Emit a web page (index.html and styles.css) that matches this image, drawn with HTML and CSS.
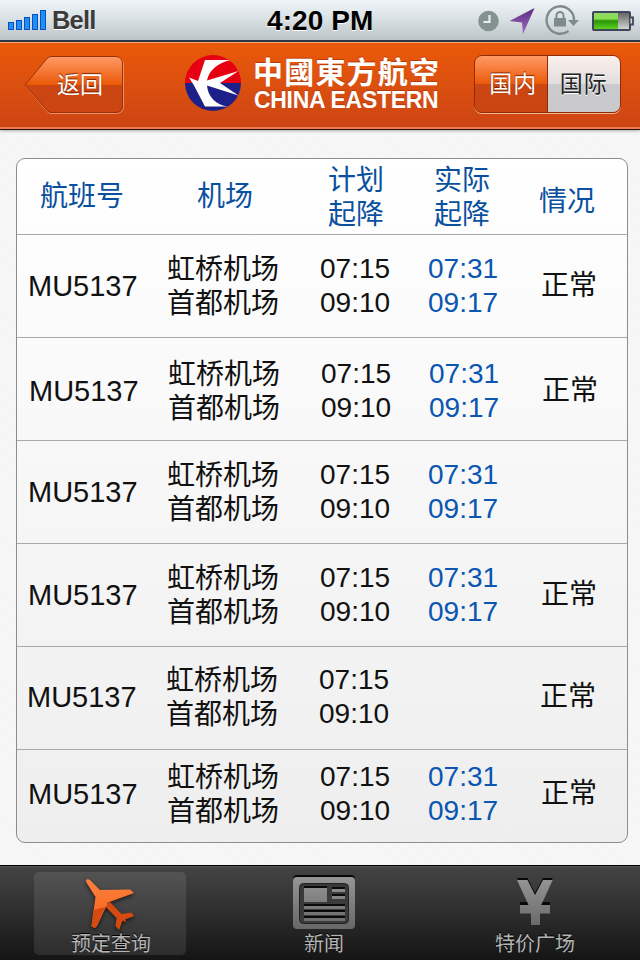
FILE: index.html
```
<!DOCTYPE html>
<html lang="zh-CN">
<head>
  <meta charset="UTF-8">
  <title>中國東方航空</title>
  <link rel="stylesheet" href="styles.css">
</head>
<body>
  <div class="status-bar">
    <div class="carrier">
      <svg class="signal" width="40" height="20" viewBox="0 0 40 20">
        <g fill="#1e8ff5" stroke="#0a4fc0">
          <rect x="0.5" y="12.5" width="5" height="7"/>
          <rect x="8.5" y="10.5" width="5" height="9"/>
          <rect x="16.5" y="7.5" width="5" height="12"/>
          <rect x="24.5" y="4.5" width="5" height="15"/>
          <rect x="32.5" y="0.5" width="5" height="19"/>
        </g>
      </svg>
      <span>Bell</span>
    </div>
    <div class="clock">4:20 PM</div>
    <svg class="status-icons" width="164" height="34" viewBox="476 3 164 34">
      <defs>
        <linearGradient id="arrow" x1="0" y1="0" x2="0" y2="1">
          <stop offset="0" stop-color="#5c2a80"/>
          <stop offset="1" stop-color="#a06fc0"/>
        </linearGradient>
        <linearGradient id="charge" x1="0" y1="0" x2="0" y2="1">
          <stop offset="0" stop-color="#8fd66a"/>
          <stop offset="0.35" stop-color="#8be04c"/>
          <stop offset="0.5" stop-color="#2a9408"/>
          <stop offset="1" stop-color="#5ed321"/>
        </linearGradient>
        <linearGradient id="empty" x1="0" y1="0" x2="0" y2="1">
          <stop offset="0" stop-color="#666"/>
          <stop offset="1" stop-color="#d2d2d2"/>
        </linearGradient>
      </defs>
      <circle cx="488.500" cy="21" r="10.300" fill="#859290"/>
      <path d="M489.500 15v7h-6" fill="none" stroke="#e9eff0" stroke-width="2.200"/>
      <path d="M534.500 8l-25 13 12.500 1.500 1 11.500z" fill="url(#arrow)"/>
      <path d="M568.500 31a13.700 13.700 0 1 1 5.500-11" fill="none" stroke="#7d8c8b" stroke-width="2.400"/>
      <path d="M568 20h11l-5.500 6z" fill="#7d8c8b"/>
      <rect x="554" y="18" width="12" height="8.500" fill="#7d8c8b"/>
      <path d="M556.500 18v-2.500a3.500 3.500 0 0 1 7 0v2.500" fill="none" stroke="#7d8c8b" stroke-width="2"/>
      <rect x="593" y="12" width="37" height="18" rx="1" fill="#fff" stroke="#3f4659" stroke-width="2"/>
      <rect x="594" y="13" width="24" height="16" fill="url(#charge)"/>
      <rect x="618" y="13" width="11" height="16" fill="url(#empty)"/>
      <path d="M630.500 17.500h2.500v7h-2.500" fill="#d5d8db" stroke="#3f4659" stroke-width="1.800"/>
    </svg>
  </div>

  <header class="navbar">
    <a class="back">
      <svg class="back-shape" width="102" height="60" viewBox="0 0 102 60">
        <defs>
          <linearGradient id="backFill" x1="0" y1="0" x2="0" y2="1">
            <stop offset="0" stop-color="#ff9a67"/>
            <stop offset="0.5" stop-color="#ec5908"/>
            <stop offset="0.5" stop-color="#cb4613"/>
            <stop offset="1" stop-color="#cc4512"/>
          </linearGradient>
        </defs>
        <path d="M27 2.500H92q7.500 0 7.500 7.500V51q0 7.500-7.500 7.500H27q-2 0-4-2L1.500 31 23 4.500q2-2 4-2z" fill="none" stroke="#ef8f66"/>
        <path d="M27 1.500H91q7.500 0 7.500 7.500V50q0 7.500-7.500 7.500H27q-2 0-4-2L1 30 23 3.500q2-2 4-2z" fill="url(#backFill)" stroke="#9c300a"/>
      </svg>
      <span class="back-text">返回</span>
    </a>
    <div class="brand">
      <svg class="logo" width="56" height="56" viewBox="0 0 56 56">
        <path d="M0 28a28 28 0 0 1 56 0z" fill="#e60012"/>
        <path d="M0 28a28 28 0 0 0 56 0z" fill="#1d2088"/>
        <path d="M20 5h25.500C33 8 24 15 22 25.500L53.500 16 35 28l18.500 12.500L22 30.500C23 42 31 50 43 51.500H20L9 30.500 4 22.500l9 3.500z" fill="#fff"/>
      </svg>
      <div class="brand-text">
        <div class="brand-cn">中國東方航空</div>
        <div class="brand-en">CHINA EASTERN</div>
      </div>
    </div>
    <div class="segment">
      <span class="seg seg-on">国内</span>
      <span class="seg">国际</span>
    </div>
  </header>

  <main class="flights">
    <div class="row head">
      <div class="h-flight">航班号</div>
      <div class="h-airport">机场</div>
      <div class="cn">计划<br>起降</div>
      <div class="cn">实际<br>起降</div>
      <div class="h-state">情况</div>
    </div>
    <div class="row">
      <div class="no">MU5137</div>
      <div class="cn">虹桥机场<br>首都机场</div>
      <div>07:15<br>09:10</div>
      <div class="actual">07:31<br>09:17</div>
      <div class="state">正常</div>
    </div>
    <div class="row row-2">
      <div class="no">MU5137</div>
      <div class="cn">虹桥机场<br>首都机场</div>
      <div>07:15<br>09:10</div>
      <div class="actual">07:31<br>09:17</div>
      <div class="state">正常</div>
    </div>
    <div class="row">
      <div class="no">MU5137</div>
      <div class="cn">虹桥机场<br>首都机场</div>
      <div>07:15<br>09:10</div>
      <div class="actual">07:31<br>09:17</div>
      <div class="state"></div>
    </div>
    <div class="row">
      <div class="no">MU5137</div>
      <div class="cn">虹桥机场<br>首都机场</div>
      <div>07:15<br>09:10</div>
      <div class="actual">07:31<br>09:17</div>
      <div class="state">正常</div>
    </div>
    <div class="row row-5">
      <div class="no">MU5137</div>
      <div class="cn">虹桥机场<br>首都机场</div>
      <div>07:15<br>09:10</div>
      <div class="actual"></div>
      <div class="state">正常</div>
    </div>
    <div class="row last">
      <div class="no">MU5137</div>
      <div class="cn">虹桥机场<br>首都机场</div>
      <div>07:15<br>09:10</div>
      <div class="actual">07:31<br>09:17</div>
      <div class="state">正常</div>
    </div>
  </main>

  <nav class="tabbar">
    <a class="tab active">
      <svg class="plane" width="60" height="57" viewBox="81 874 60 57">
        <defs>
          <linearGradient id="plane" x1="0" y1="0" x2="0" y2="1">
            <stop offset="0" stop-color="#ff8440"/>
            <stop offset="1" stop-color="#f25c14"/>
          </linearGradient>
        </defs>
        <path d="M107 904l3-2 11.500 12 10-1.500 2.500 3.500-9 3.500 1.500 3-4-2-3.500 9.500-3.500-4 1-8-11-11.500z" fill="#d54a10"/>
        <path d="M86 880q1.500-1.500 4 0l10 10 30-.5 4 3.500-26 9.500-11 23.500-2 2-3.500-1.500 4-29.500-9-14.500z" fill="url(#plane)"/>
        <path d="M93.500 910l11.500-3-8.500 19-1.500 2-3.500-1.500z" fill="#d54a10"/>
      </svg>
      <span>预定查询</span>
    </a>
    <a class="tab tab-news">
      <svg width="64" height="57" viewBox="292 874 64 57">
        <defs>
          <linearGradient id="news" x1="0" y1="874" x2="0" y2="930" gradientUnits="userSpaceOnUse">
            <stop offset="0" stop-color="#999"/>
            <stop offset="1" stop-color="#666"/>
          </linearGradient>
        </defs>
        <rect x="293" y="875" width="62" height="53" rx="4" fill="#080808"/>
        <rect x="293" y="877" width="62" height="52" rx="4" fill="url(#news)"/>
        <rect x="299.500" y="883.500" width="49" height="40" rx="4" fill="#3a3a3a" stroke="#222"/>
        <g fill="#0a0a0a">
          <rect x="304" y="886" width="23" height="2"/>
          <rect x="332" y="887" width="13" height="2"/>
          <rect x="332" y="894" width="13" height="2"/>
          <rect x="304" y="904" width="41" height="2"/>
          <rect x="304" y="910" width="41" height="2"/>
          <rect x="304" y="916" width="41" height="2"/>
        </g>
        <g fill="url(#news)">
          <rect x="304" y="888" width="23" height="14"/>
          <rect x="332" y="889" width="13" height="3"/>
          <rect x="332" y="896" width="13" height="3"/>
          <rect x="304" y="906" width="41" height="3"/>
          <rect x="304" y="912" width="41" height="3"/>
          <rect x="304" y="918" width="41" height="3"/>
        </g>
      </svg>
      <span>新闻</span>
    </a>
    <a class="tab">
      <svg width="40" height="57" viewBox="515 874 40 57">
        <path d="M517 878h10.500l7.500 15 8-15h9.700l-11.500 24h8.800v11h-10v12h-9v-12h-11v-11h8.500z" fill="#080808"/>
        <path d="M517 880h10.500l7.500 15 8-15h9.700l-11.500 25h8.800v8.500h-10v11.500h-9v-11.500h-11v-8.500h8.500z" fill="url(#news)"/>
      </svg>
      <span>特价广场</span>
    </a>
  </nav>
</body>
</html>
```
FILE: styles.css
```
* {
  box-sizing: border-box;
}
body {
  width: 640px;
  height: 960px;
  margin: 0;
  display: flex;
  flex-direction: column;
  overflow: hidden;
  font-family: "Liberation Sans", "Noto Sans CJK SC", sans-serif;
  color: #111;
  background: repeating-linear-gradient(45deg, #f7f7f7 0, #f7f7f7 2px, #f4f4f4 2px, #f4f4f4 3px);
}
.status-bar {
  height: 42px;
  flex: none;
  display: grid;
  grid-template-columns: 267px 1fr 164px;
  align-items: center;
  border-bottom: 2px solid #2b3a46;
  background: linear-gradient(#eff5f8, #dbe2e6 45%, #bcc4c8);
}
.carrier {
  display: flex;
  align-items: center;
  padding-left: 8px;
  gap: 4px;
  font-size: 25.5px;
  font-weight: bold;
  letter-spacing: -0.8px;
  color: #3b3b3b;
  text-shadow: 0 1px 0 #fff;
}
.clock {
  font-size: 28px;
  font-weight: bold;
  letter-spacing: 0.1px;
  padding-top: 1px;
  color: #000;
  text-shadow: 0 1px 0 #fff;
}
.navbar {
  height: 88px;
  flex: none;
  display: flex;
  align-items: flex-start;
  padding: 12px 19px 0 24px;
  border-top: 1px solid #f7a57a;
  border-bottom: 1px solid #2a120a;
  background: linear-gradient(#ea5a0a, #cc4414);
  box-shadow: inset 0 -2px 0 #ee7b4e, 0 1px 3px rgba(0, 0, 0, 0.3);
}
.back {
  display: grid;
  width: 102px;
  height: 60px;
  align-items: center;
}
.back-shape, .back-text {
  grid-area: 1 / 1;
}
.back-text {
  padding: 0 0 4px 33px;
  font-size: 23px;
  color: #fff;
  text-shadow: 0 -1px 1px #7a2000;
}
.brand {
  display: flex;
  margin-left: 59px;
}
.brand-text {
  margin-left: 12px;
  color: #fff;
  font-weight: bold;
  text-shadow: 0 -1px 0 #b53c0c;
}
.brand-cn {
  font-family: "Noto Sans CJK TC", sans-serif;
  font-size: 30px;
  letter-spacing: 1.2px;
  line-height: 31px;
  white-space: nowrap;
}
.brand-en {
  padding: 1px 0 0 1px;
  font-size: 23px;
  line-height: 26px;
  letter-spacing: -0.3px;
  white-space: nowrap;
}
.segment {
  display: flex;
  width: 147px;
  height: 58px;
  margin-left: auto;
  border: 1px solid #8f2c08;
  border-radius: 8px;
  overflow: hidden;
  box-shadow: 0 1px 0 #f6b494;
}
.seg {
  width: 73px;
  font-size: 23px;
  line-height: 56px;
  text-align: center;
  letter-spacing: 1px;
  color: #222;
  text-shadow: 0 1px 0 #fff;
  background: linear-gradient(#fbf0ec, #e0dede 50%, #cbcbcf 50%, #c9c9cc);
}
.seg-on {
  color: #fff;
  border-right: 1px solid #8f2c08;
  text-shadow: 0 -1px 1px #7a2000;
  background: linear-gradient(#ff9a67, #ec5908 50%, #cb4613 50%, #cb4513);
  padding-left: 5px;
}
.flights {
  width: 612px;
  height: 685px;
  flex: none;
  margin: 28px 0 0 16px;
  border: 1px solid #8d8d8d;
  border-radius: 9px;
  background: linear-gradient(#fff, #eee);
}
.row {
  height: 103px;
  display: grid;
  grid-template-columns: 139px 153px 108px 113px 1fr;
  align-items: center;
  padding-left: 11px;
  border-bottom: 1px solid #a9a9a9;
  font-size: 28px;
  line-height: 34px;
  white-space: nowrap;
}
.head {
  height: 76px;
  grid-template-columns: 157px 131px 106px 105px 1fr;
  padding-left: 23px;
  color: #0a50a0;
}
.h-state {
  padding-top: 10px;
}
.cn {
  padding-top: 2px;
}
.no {
  font-size: 29px;
}
.actual {
  color: #0a56b0;
}
.row-2 {
  padding-left: 12px;
  padding-top: 4px;
}
.row-5 {
  padding-left: 10px;
  padding-bottom: 2px;
}
.last {
  height: 92px;
  padding-bottom: 4px;
  border-bottom: none;
}
.tabbar {
  height: 95px;
  flex: none;
  margin-top: auto;
  display: flex;
  gap: 60px;
  padding: 6px 0 0 34px;
  border-top: 1px solid #000;
  background: linear-gradient(#454545, #151515);
  box-shadow: inset 0 1px 0 #555;
}
.tab {
  width: 152px;
  height: 83px;
  display: flex;
  flex-direction: column;
  align-items: center;
  padding: 2px 0 0 2px;
  font-size: 20px;
  line-height: 26px;
  color: #b4b4b4;
  text-shadow: 0 -1px 0 #000;
}
.tab svg {
  flex: none;
}
.tab-news {
  padding-left: 4px;
}
.active {
  border-radius: 5px;
  background: linear-gradient(#535353, #2d2d2d);
}
.plane {
  filter: drop-shadow(0 2px 2px rgba(0, 0, 0, 0.6));
}
```
